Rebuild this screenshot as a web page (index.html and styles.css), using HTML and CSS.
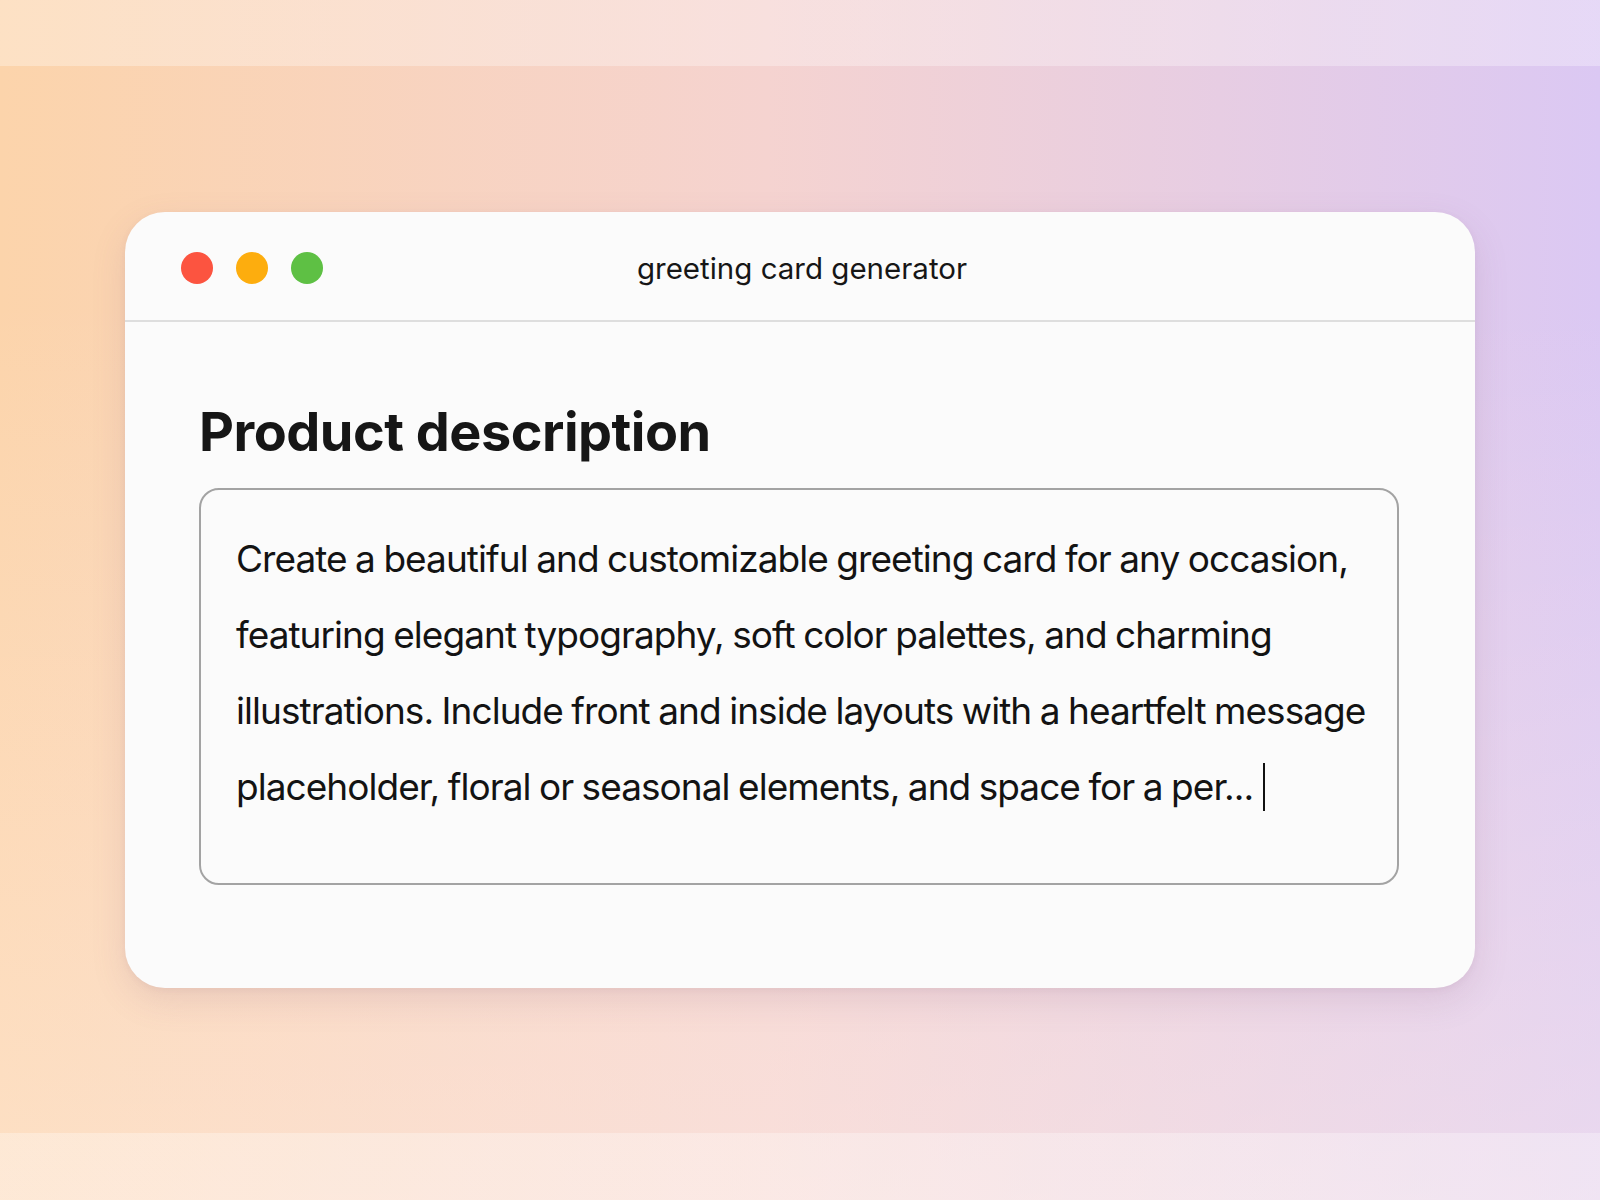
FILE: index.html
```html
<!DOCTYPE html>
<html lang="en">
<head>
<meta charset="utf-8">
<title>greeting card generator</title>
<link rel="stylesheet" href="styles.css">
</head>
<body>
<main class="stage">
  <section class="window">
    <header class="titlebar">
      <div class="lights">
        <span class="light light-red"></span>
        <span class="light light-yellow"></span>
        <span class="light light-green"></span>
      </div>
      <div class="title">greeting card generator</div>
      <div class="spacer"></div>
    </header>
    <div class="content">
      <h1 class="heading">Product description</h1>
      <div class="field">
        <p class="field-text">Create a beautiful and customizable greeting card for any occasion,<br>featuring elegant typography, soft color palettes, and charming<br>illustrations. Include front and inside layouts with a heartfelt message<br>placeholder, floral or seasonal elements, and space for a per...<span class="caret"></span></p>
      </div>
    </div>
  </section>
</main>
</body>
</html>
```

FILE: styles.css
```css
* { box-sizing: border-box; }

html, body {
  margin: 0;
  padding: 0;
}

body {
  width: 1600px;
  height: 1200px;
  overflow: hidden;
  font-family: "Inter", "Noto Sans", "Liberation Sans", sans-serif;
  color: #141414;
  background:
    linear-gradient(to bottom,
      rgba(255,255,255,0.30) 0, rgba(255,255,255,0.30) 66px,
      rgba(255,255,255,0) 66px, rgba(255,255,255,0) 1133px,
      rgba(255,255,255,0.30) 1133px, rgba(255,255,255,0.30) 100%),
    linear-gradient(to bottom, rgba(255,240,232,0) 25%, rgba(255,240,232,0.42) 100%),
    linear-gradient(90deg, #fcd4ab 0%, #f5d3d0 48%, #dbc8f3 100%);
}

.stage {
  height: 1200px;
  display: flex;
  justify-content: center;
  padding-top: 212px;
}

.window {
  width: 1350px;
  height: 776px;
  background: #fbfbfb;
  border-radius: 40px;
  box-shadow: 0 12px 34px rgba(140, 100, 130, 0.16), 0 2px 6px rgba(140, 100, 130, 0.08);
  display: flex;
  flex-direction: column;
  overflow: hidden;
}

.titlebar {
  height: 110px;
  flex: none;
  border-bottom: 2px solid #dedede;
  display: grid;
  grid-template-columns: 1fr auto 1fr;
  align-items: center;
  padding: 0 56px;
}

.lights {
  display: flex;
  gap: 23px;
  padding-top: 4px;
}

.light {
  width: 32px;
  height: 32px;
  border-radius: 50%;
}
.light-red { background: #fc5440; }
.light-yellow { background: #fdad0e; }
.light-green { background: #5ec044; }

.title {
  font-size: 29.5px;
  color: #161616;
  padding-top: 4px;
  padding-left: 4px;
}

.content {
  padding: 78px 76px 0 74px;
}

.heading {
  margin: 0 0 24px;
  font-size: 54px;
  line-height: 64px;
  font-weight: 700;
  color: #161616;
  letter-spacing: -0.5px;
}

.field {
  height: 397px;
  border: 2px solid #a3a3a3;
  border-radius: 20px;
  padding: 31px 35px 0;
}

.field-text {
  margin: 0;
  font-size: 37px;
  line-height: 76px;
  color: #131313;
  white-space: nowrap;
  letter-spacing: -0.95px;
  word-spacing: -1px;
}

.caret {
  display: inline-block;
  width: 2px;
  height: 48px;
  background: #111;
  margin-left: 10px;
  vertical-align: -11px;
}
```
